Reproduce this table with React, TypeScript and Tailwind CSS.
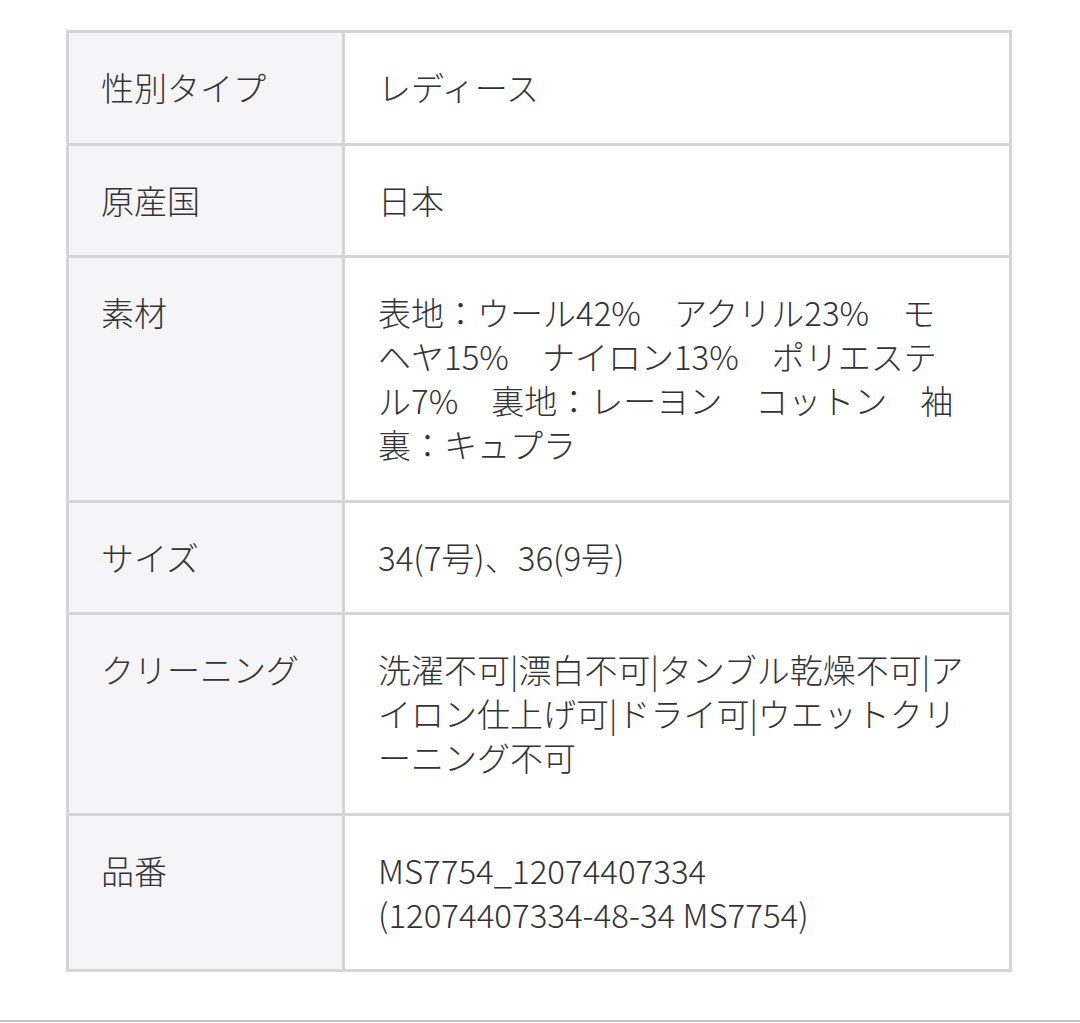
const ROWS: { label: string; lines: string[] }[] = [
  { label: "性別タイプ", lines: ["レディース"] },
  { label: "原産国", lines: ["日本"] },
  {
    label: "素材",
    lines: [
      "表地：ウール42%　アクリル23%　モ",
      "ヘヤ15%　ナイロン13%　ポリエステ",
      "ル7%　裏地：レーヨン　コットン　袖",
      "裏：キュプラ",
    ],
  },
  { label: "サイズ", lines: ["34(7号)、36(9号)"] },
  {
    label: "クリーニング",
    lines: [
      "洗濯不可|漂白不可|タンブル乾燥不可|ア",
      "イロン仕上げ可|ドライ可|ウエットクリ",
      "ーニング不可",
    ],
  },
  {
    label: "品番",
    lines: ["MS7754_12074407334", "(12074407334-48-34 MS7754)"],
  },
];

export default function App() {
  return (
    <div
      className="w-[1080px] h-[1023px] bg-white text-[#333333] overflow-hidden font-light"
      style={{ fontFamily: '"Noto Sans CJK JP", "Noto Sans", sans-serif' }}
    >
      <div className="ml-[66px] mt-[30px] w-[946px] border-[3px] border-[#d5d5d7]">
        {ROWS.map((row, i) => (
          <div
            key={row.label}
            className={`flex ${i > 0 ? "border-t-[3px] border-[#d5d5d7]" : ""}`}
          >
            <div className="w-[276px] shrink-0 bg-[#f5f5f7] border-r-[3px] border-[#d5d5d7] pl-[32px] pt-[32px] pb-[33.5px] text-[33px] leading-[44px]">
              {row.label}
            </div>
            <div className="flex-1 pl-[33px] pt-[32px] pb-[33.5px] text-[33px] leading-[44px] whitespace-nowrap">
              {row.lines.map((line) => (
                <div key={line}>{line}</div>
              ))}
            </div>
          </div>
        ))}
      </div>
      <div className="mt-[48px] h-[2px] w-full bg-[#c4c4c4]" />
    </div>
  );
}
